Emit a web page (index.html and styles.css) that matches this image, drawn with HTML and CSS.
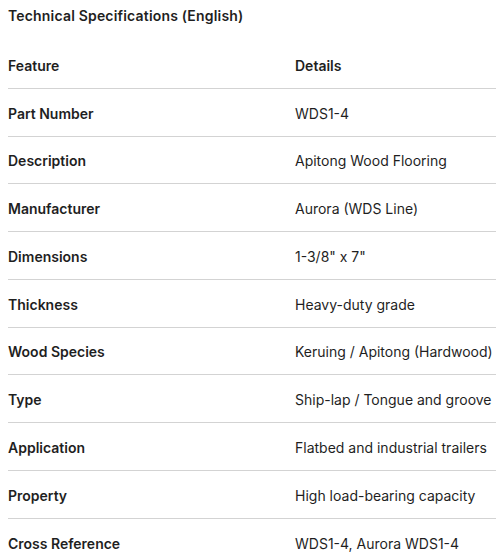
FILE: index.html
```html
<!DOCTYPE html>
<html>
<head>
<meta charset="utf-8">
<link rel="stylesheet" href="styles.css">
</head>
<body>
<div class="page">
  <h3 class="title">Technical Specifications (English)</h3>
  <div class="spec">
    <div class="row head"><div class="k">Feature</div><div class="k">Details</div></div>
    <div class="row"><div class="k">Part Number</div><div class="v">WDS1-4</div></div>
    <div class="row"><div class="k">Description</div><div class="v">Apitong Wood Flooring</div></div>
    <div class="row"><div class="k">Manufacturer</div><div class="v">Aurora (WDS Line)</div></div>
    <div class="row"><div class="k">Dimensions</div><div class="v">1-3/8" x 7"</div></div>
    <div class="row"><div class="k">Thickness</div><div class="v">Heavy-duty grade</div></div>
    <div class="row"><div class="k">Wood Species</div><div class="v">Keruing / Apitong (Hardwood)</div></div>
    <div class="row"><div class="k">Type</div><div class="v">Ship-lap / Tongue and groove</div></div>
    <div class="row"><div class="k">Application</div><div class="v">Flatbed and industrial trailers</div></div>
    <div class="row"><div class="k">Property</div><div class="v">High load-bearing capacity</div></div>
    <div class="row last"><div class="k">Cross Reference</div><div class="v">WDS1-4, Aurora WDS1-4</div></div>
  </div>
</div>
</body>
</html>
```
FILE: styles.css
```css
html, body {
  margin: 0;
  padding: 0;
  background: #ffffff;
  overflow: hidden;
}
.page {
  padding-left: 8px;
  font-family: Inter, "Noto Sans", sans-serif;
  color: #1f1f1f;
}
.title {
  margin: 0;
  height: 41px;
  box-sizing: border-box;
  padding-top: 6px;
  font-size: 14px;
  line-height: 20px;
  font-weight: 600;
  letter-spacing: 0.18px;
}
.spec {
  display: flex;
  flex-direction: column;
}
.row {
  display: grid;
  grid-template-columns: 287px 1fr;
  align-items: center;
  height: 47.75px;
  box-sizing: border-box;
  padding-top: 3px;
  border-bottom: 1px solid #d3d3d3;
  font-size: 14px;
  line-height: 20px;
}
.row.last {
  border-bottom: none;
}
.k {
  font-weight: 600;
}
.v {
  font-weight: 400;
}
```
